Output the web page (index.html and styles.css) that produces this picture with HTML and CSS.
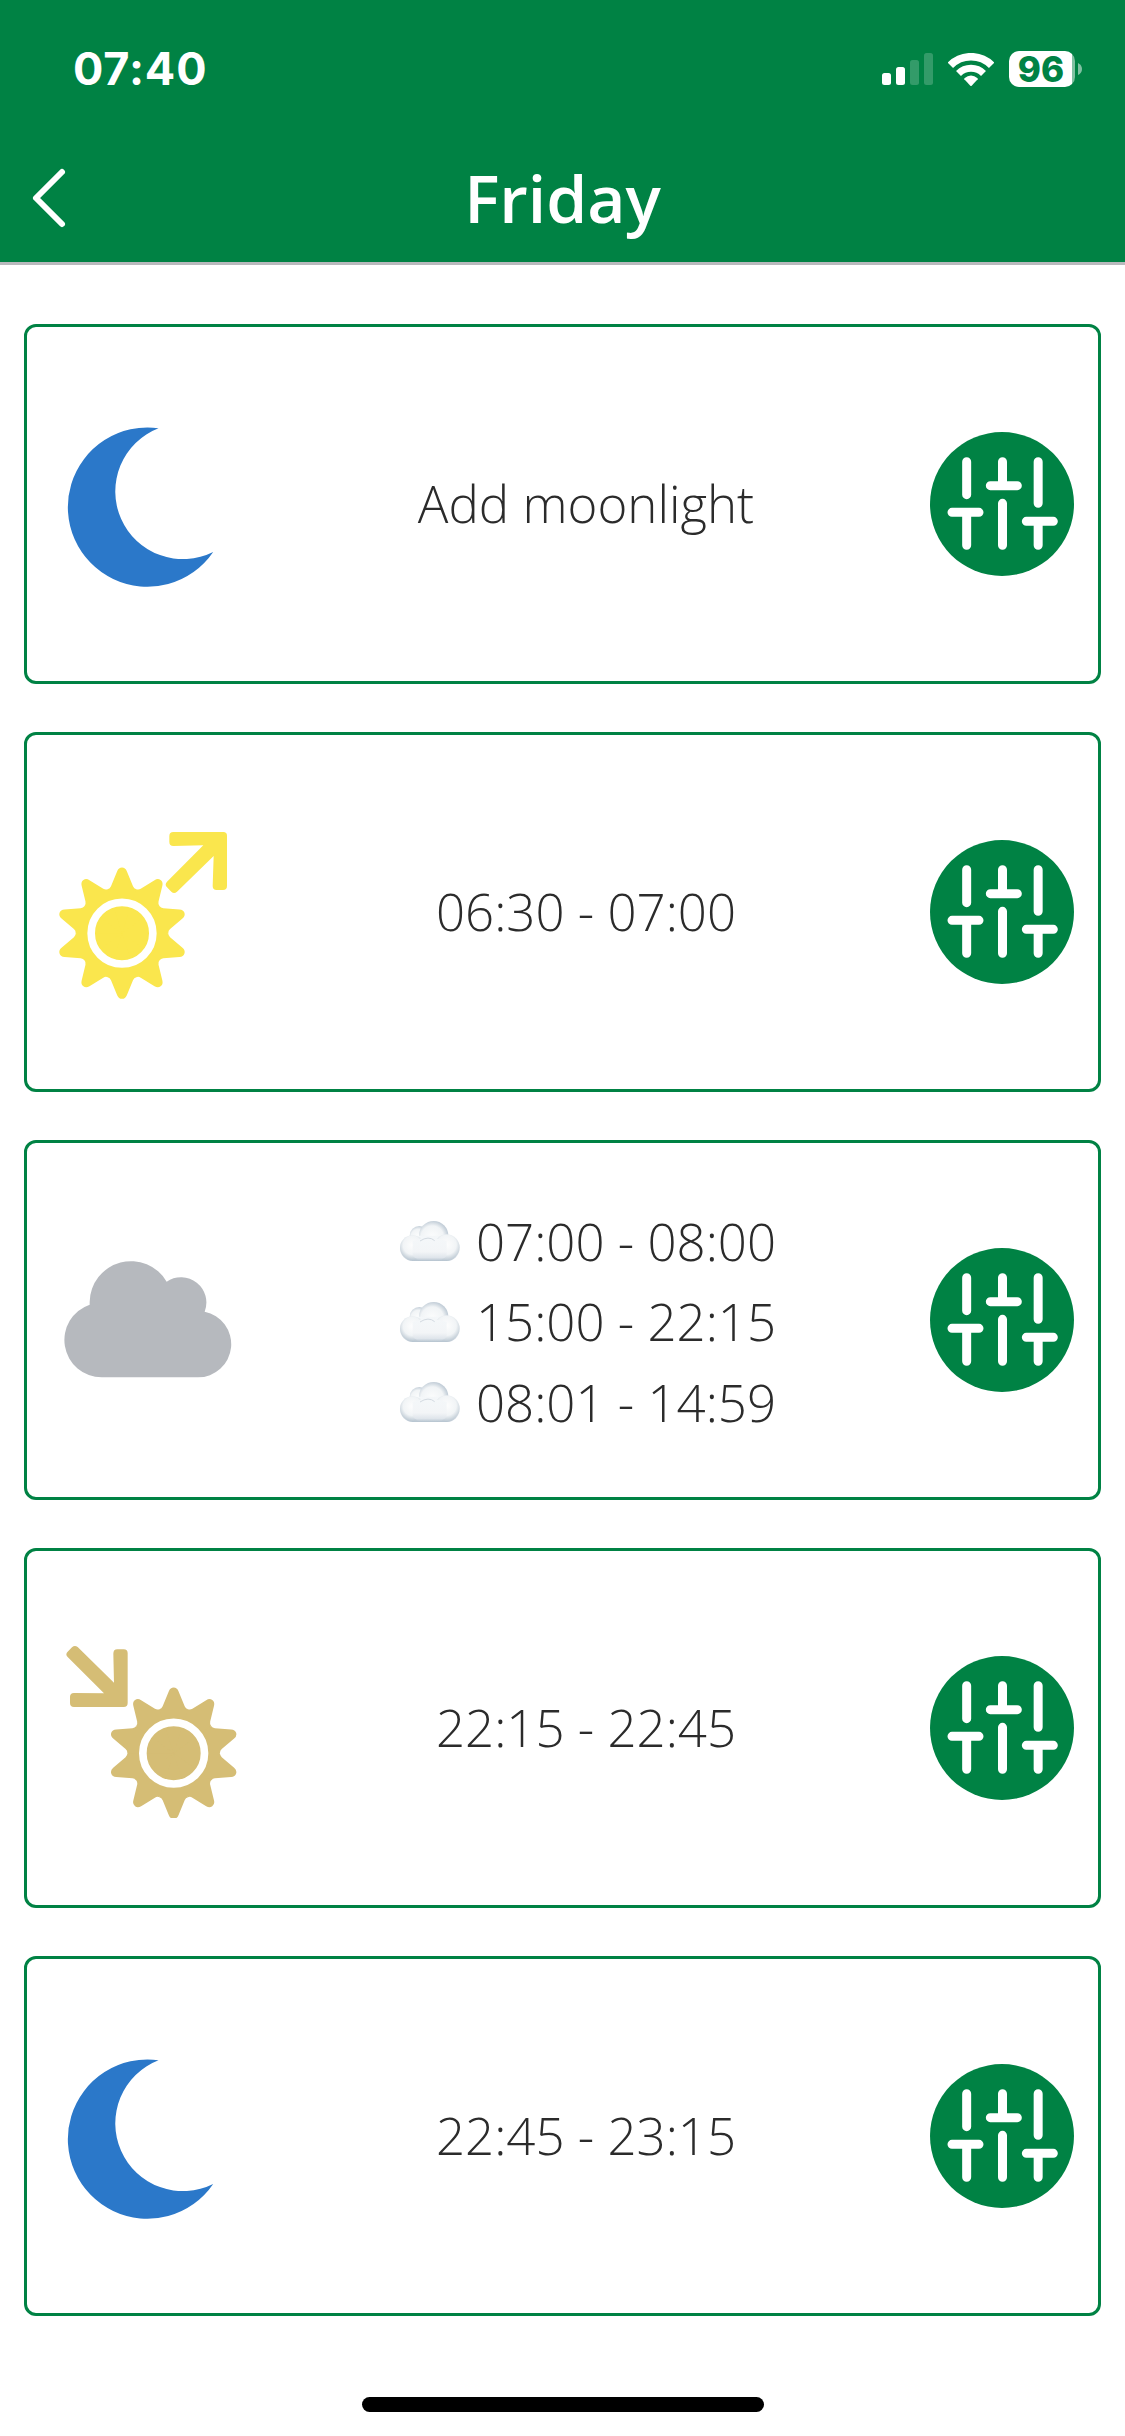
FILE: index.html
```html
<!DOCTYPE html>
<html lang="en">
<head>
  <meta charset="UTF-8">
  <title>Friday</title>
  <link rel="stylesheet" href="styles.css">
</head>
<body>
  <!-- shared shapes -->
  <svg class="defs" width="0" height="0">
    <defs>
      <path id="ray" d="M0 0L-43 -132Q-36 -134 -33 -141L-14.500 -186Q-10 -197 0 -197Q10 -197 14.500 -186L33 -141Q36 -134 43 -132Z"/>
      <g id="sun">
        <circle r="137"/>
        <use href="#ray"/>
        <use href="#ray" transform="rotate(36)"/>
        <use href="#ray" transform="rotate(72)"/>
        <use href="#ray" transform="rotate(108)"/>
        <use href="#ray" transform="rotate(144)"/>
        <use href="#ray" transform="rotate(180)"/>
        <use href="#ray" transform="rotate(216)"/>
        <use href="#ray" transform="rotate(252)"/>
        <use href="#ray" transform="rotate(288)"/>
        <use href="#ray" transform="rotate(324)"/>
        <circle r="92.500" fill="none" stroke="#fff" stroke-width="23"/>
      </g>
      <path id="moon" d="M101.500 14.300A79.600 79.600 0 1 0 156.200 138A67.700 67.700 0 1 1 101.500 14.300Z"/>
      <g id="sliders">
        <circle cx="306" cy="312" r="216" fill="#008244"/>
        <path d="M200 185V284M156 337H237M200 337V436M307.500 185V257M271 257H352M307.500 310V436M414.500 185V310M379 364H460M414.500 364V436" fill="none" stroke="#fff" stroke-width="27" stroke-linecap="round"/>
      </g>
      <linearGradient id="puff" x1="0" y1="0" x2="0" y2="1">
        <stop offset="0" stop-color="#f4f7f9"/>
        <stop offset="0.600" stop-color="#f3f5f7"/>
        <stop offset="0.850" stop-color="#dfe5eb"/>
        <stop offset="1" stop-color="#b4c2ce"/>
      </linearGradient>
      <radialGradient id="puffTop" cx="0.450" cy="0.550" r="0.550">
        <stop offset="0" stop-color="#fcfdfd"/>
        <stop offset="0.700" stop-color="#f1f4f6"/>
        <stop offset="1" stop-color="#c3ced8"/>
      </radialGradient>
      <radialGradient id="puffSide" cx="0.500" cy="0.400" r="0.620">
        <stop offset="0" stop-color="#fdfdfd"/>
        <stop offset="0.600" stop-color="#f1f4f6"/>
        <stop offset="1" stop-color="#b8c5d0"/>
      </radialGradient>
      <g id="cloudlet">
        <circle cx="118" cy="134" r="29" fill="url(#puffTop)"/>
        <circle cx="161" cy="134" r="44" fill="url(#puffTop)"/>
        <rect x="60" y="134" width="179" height="76" rx="38" fill="url(#puff)"/>
        <circle cx="97" cy="170" r="37" fill="url(#puffSide)"/>
        <circle cx="200" cy="169" r="39" fill="url(#puffSide)"/>
        <path d="M98 150Q148 132 200 150V188Q200 208 150 210Q98 208 98 188Z" fill="url(#puff)"/>
        <path d="M120 150Q146 133 164 149" fill="none" stroke="#d3dae1" stroke-width="3"/>
      </g>
    </defs>
  </svg>

  <header class="header">
    <div class="statusbar">
      <div class="clock">07:40</div>
      <div class="status-icons">
        <svg class="signal" viewBox="0 0 51 32">
          <rect x="0" y="20" width="9" height="12" rx="2.500"/>
          <rect x="14" y="14" width="9" height="18" rx="2.500"/>
          <rect x="28" y="7" width="9" height="25" rx="2.500" opacity="0.200"/>
          <rect x="42" y="0" width="9" height="32" rx="2.500" opacity="0.200"/>
        </svg>
        <svg class="wifi" viewBox="324 96 138 99">
          <g fill="none" stroke="#fff">
            <path d="M331 133A87.500 87.500 0 0 1 455 133" stroke-width="23"/>
            <path d="M355.500 157.500A53 53 0 0 1 430.500 157.500" stroke-width="21"/>
          </g>
          <path d="M373 172Q393 155 413 172V175L395 194Q393 196 391 194L373 175Z"/>
        </svg>
        <div class="battery"><span>96</span></div>
        <svg class="battery-cap" viewBox="0 0 4 12"><path d="M0 0Q4 2 4 6Q4 10 0 12Z"/></svg>
      </div>
    </div>
    <div class="navbar">
      <svg class="back" viewBox="0 0 40 64"><path d="M32 6L6 32L32 58"/></svg>
      <h1>Friday</h1>
    </div>
  </header>

  <main class="list">
    <div class="card">
      <svg class="icon moon" viewBox="0 0 180 180"><use href="#moon"/></svg>
      <div class="label">Add moonlight</div>
      <svg class="settings" viewBox="90 96 432 432"><use href="#sliders"/></svg>
    </div>

    <div class="card">
      <svg class="icon sunrise" viewBox="51 36 540 540">
        <use href="#sun" x="246" y="369.500"/>
        <path d="M400 66H550Q561 66 561 77V227Q561 240 549 240H530Q518 240 518 228L521 138L411 245Q402 253 394 245L381 232Q373 224 381 215L490 106L400 108Q388 108 388 96V78Q388 66 400 66Z"/>
      </svg>
      <div class="label">06:30 - 07:00</div>
      <svg class="settings" viewBox="90 96 432 432"><use href="#sliders"/></svg>
    </div>

    <div class="card">
      <svg class="icon cloud" viewBox="51 0 540 540">
        <path d="M185 442A112 112 0 0 1 149 224V216A124 124 0 0 1 380 155A76 76 0 0 1 494 245A99.500 99.500 0 0 1 474 442Z"/>
      </svg>
      <div class="label rows">
        <div class="row"><svg class="cloudlet" viewBox="60 90 180 120"><use href="#cloudlet"/></svg>07:00 - 08:00</div>
        <div class="row"><svg class="cloudlet" viewBox="60 90 180 120"><use href="#cloudlet"/></svg>15:00 - 22:15</div>
        <div class="row"><svg class="cloudlet" viewBox="60 90 180 120"><use href="#cloudlet"/></svg>08:01 - 14:59</div>
      </div>
      <svg class="settings" viewBox="90 96 432 432"><use href="#sliders"/></svg>
    </div>

    <div class="card">
      <svg class="icon sunset" viewBox="51 54 540 540">
        <use href="#sun" x="401" y="399.500"/>
        <path d="M113 81L222 188L220 101Q220 88 232 88H251Q263 88 263 100V249Q263 261 251 261H102Q90 261 90 249V231Q90 219 102 219L192 220L83 111Q75 103 83 95L96 82Q104 74 113 81Z"/>
      </svg>
      <div class="label">22:15 - 22:45</div>
      <svg class="settings" viewBox="90 96 432 432"><use href="#sliders"/></svg>
    </div>

    <div class="card">
      <svg class="icon moon" viewBox="0 0 180 180"><use href="#moon"/></svg>
      <div class="label">22:45 - 23:15</div>
      <svg class="settings" viewBox="90 96 432 432"><use href="#sliders"/></svg>
    </div>
  </main>

  <div class="home-indicator"></div>
</body>
</html>
```
FILE: styles.css
```css
* {
  box-sizing: border-box;
}
body {
  margin: 0;
  height: 2436px;
  display: flex;
  flex-direction: column;
  background: #fff;
  color: #2b2b2b;
  font-family: "Open Sans", sans-serif;
}
svg {
  display: block;
  flex: none;
}
.defs {
  position: absolute;
}
.header {
  height: 265px;
  background: #008244;
  border-bottom: 3px solid #b9b9bd;
  color: #fff;
}
.statusbar {
  height: 138px;
  padding: 0 43px 0 73px;
  display: flex;
  align-items: center;
  justify-content: space-between;
}
.clock {
  font-family: Inter, sans-serif;
  font-size: 45px;
  font-weight: 700;
  line-height: 54px;
  letter-spacing: 0.9px;
}
.status-icons {
  display: flex;
  align-items: center;
}
.status-icons svg {
  fill: #fff;
}
.signal {
  width: 51px;
  height: 32px;
  margin-right: 15px;
}
.wifi {
  width: 46px;
  height: 33px;
  margin-right: 15px;
}
.battery {
  width: 66px;
  height: 36px;
  border-radius: 10px;
  background: linear-gradient(to right, #fff 63px, #80c1a2 63px);
  color: #008244;
  font-family: Inter, sans-serif;
  font-size: 35px;
  font-weight: 800;
  line-height: 36px;
  padding-right: 2px;
  text-align: center;
}
.battery-cap {
  width: 4px;
  height: 12px;
  margin-left: 3px;
  opacity: 0.5;
}
.navbar {
  position: relative;
  height: 124px;
}
.navbar h1 {
  margin: 0;
  font-size: 66px;
  font-weight: 600;
  line-height: 118px;
  text-align: center;
}
.back {
  position: absolute;
  left: 30px;
  top: 28px;
  width: 40px;
  height: 64px;
  fill: none;
  stroke: #fff;
  stroke-width: 6;
  stroke-linecap: round;
  stroke-linejoin: round;
}
.list {
  padding: 59px 24px 0;
  display: flex;
  flex-direction: column;
  gap: 48px;
}
.card {
  height: 360px;
  padding: 0 24px 0 30px;
  display: flex;
  align-items: center;
  border: 3px solid #008244;
  border-radius: 12px;
}
.icon {
  width: 180px;
  height: 180px;
  margin-right: 5px;
}
.moon {
  fill: #2b78c9;
}
.sunrise {
  fill: #fae64d;
}
.cloud {
  fill: #b6b9be;
}
.sunset {
  fill: #d5bd75;
}
.label {
  flex: 1;
  padding-bottom: 2px;
  font-size: 51px;
  font-weight: 300;
  line-height: 80.5px;
  text-align: center;
}
.rows {
  padding: 3px 0 0 4px;
}
.row {
  display: flex;
  align-items: center;
  justify-content: center;
}
.cloudlet {
  width: 60px;
  height: 40px;
  margin-right: 16px;
}
.settings {
  width: 144px;
  height: 144px;
}
.home-indicator {
  width: 402px;
  height: 15px;
  margin: auto auto 24px;
  border-radius: 8px;
  background: #000;
}
```
